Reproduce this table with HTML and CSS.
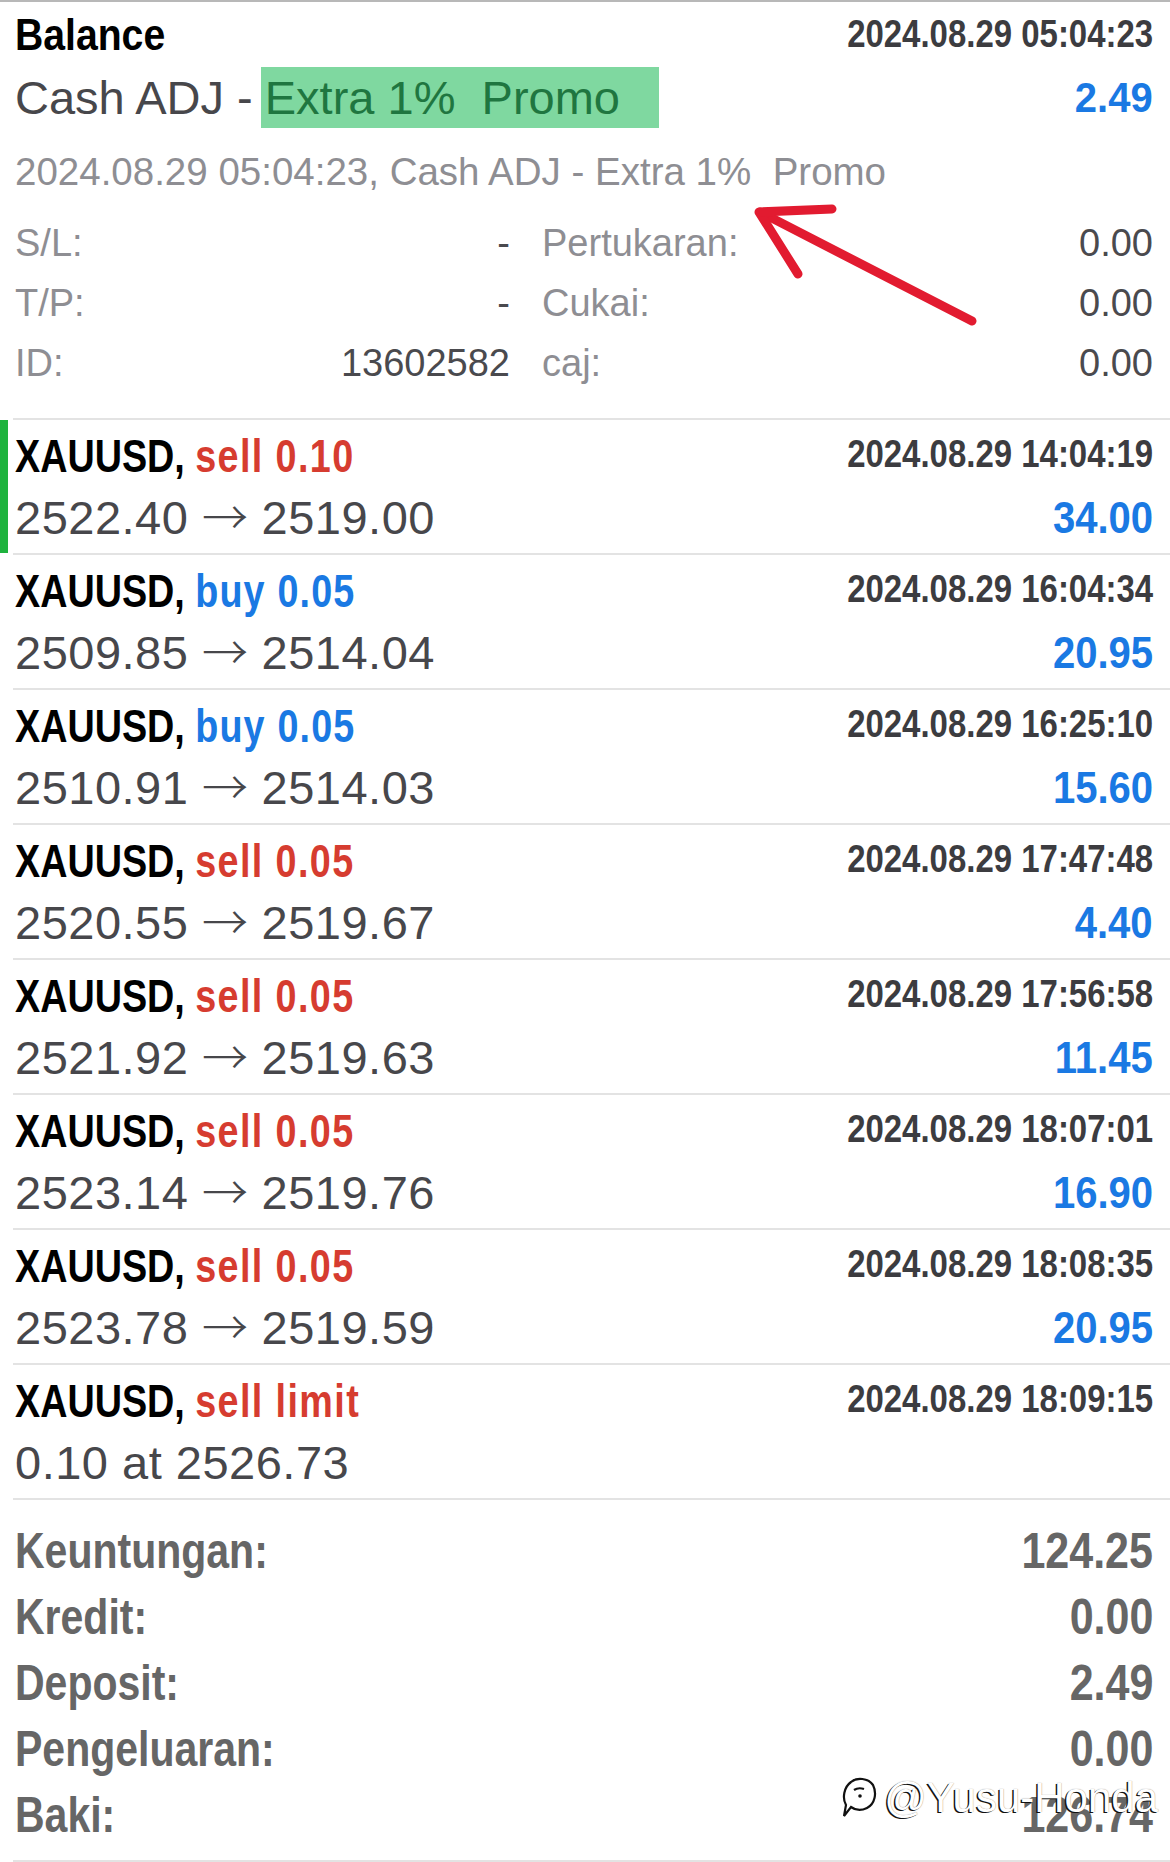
FILE: index.html
```html
<!DOCTYPE html>
<html lang="ms">
<head>
<meta charset="utf-8">
<title>Sejarah</title>
<link rel="stylesheet" href="styles.css">
</head>
<body>
<div class="page">
  <div class="topline"></div>

  <section class="deal">
    <div class="deal-top">
      <span class="deal-title bold">Balance</span>
      <span class="time bold">2024.08.29 05:04:23</span>
    </div>
    <div class="deal-main">
      <span class="comment">Cash ADJ - <span class="hl">Extra 1%&nbsp; Promo</span></span>
      <span class="amount bold">2.49</span>
    </div>
    <div class="detail">2024.08.29 05:04:23, Cash ADJ - Extra 1%&nbsp; Promo</div>
    <div class="kv-grid">
      <div class="kv"><span class="k">S/L:</span><span class="v">-</span></div>
      <div class="kv"><span class="k">Pertukaran:</span><span class="v">0.00</span></div>
      <div class="kv"><span class="k">T/P:</span><span class="v">-</span></div>
      <div class="kv"><span class="k">Cukai:</span><span class="v">0.00</span></div>
      <div class="kv"><span class="k">ID:</span><span class="v">13602582</span></div>
      <div class="kv"><span class="k">caj:</span><span class="v">0.00</span></div>
    </div>
  </section>

  <svg class="annot" width="1170" height="420" viewBox="0 0 1170 420" aria-hidden="true">
    <path d="M972 321 L760 212" />
    <path d="M832 209 L759 212 L798 274" />
  </svg>

  <div class="trades">
    <div class="trade">
      <div class="mark on"></div>
      <div class="trade-body">
        <div class="line"><span class="sym bold">XAUUSD, <span class="sell">sell 0.10</span></span><span class="time bold">2024.08.29 14:04:19</span></div>
        <div class="line"><span class="price">2522.40 <span class="arr">→</span> 2519.00</span><span class="amount bold">34.00</span></div>
      </div>
    </div>
    <div class="trade">
      <div class="mark"></div>
      <div class="trade-body">
        <div class="line"><span class="sym bold">XAUUSD, <span class="buy">buy 0.05</span></span><span class="time bold">2024.08.29 16:04:34</span></div>
        <div class="line"><span class="price">2509.85 <span class="arr">→</span> 2514.04</span><span class="amount bold">20.95</span></div>
      </div>
    </div>
    <div class="trade">
      <div class="mark"></div>
      <div class="trade-body">
        <div class="line"><span class="sym bold">XAUUSD, <span class="buy">buy 0.05</span></span><span class="time bold">2024.08.29 16:25:10</span></div>
        <div class="line"><span class="price">2510.91 <span class="arr">→</span> 2514.03</span><span class="amount bold">15.60</span></div>
      </div>
    </div>
    <div class="trade">
      <div class="mark"></div>
      <div class="trade-body">
        <div class="line"><span class="sym bold">XAUUSD, <span class="sell">sell 0.05</span></span><span class="time bold">2024.08.29 17:47:48</span></div>
        <div class="line"><span class="price">2520.55 <span class="arr">→</span> 2519.67</span><span class="amount bold">4.40</span></div>
      </div>
    </div>
    <div class="trade">
      <div class="mark"></div>
      <div class="trade-body">
        <div class="line"><span class="sym bold">XAUUSD, <span class="sell">sell 0.05</span></span><span class="time bold">2024.08.29 17:56:58</span></div>
        <div class="line"><span class="price">2521.92 <span class="arr">→</span> 2519.63</span><span class="amount bold">11.45</span></div>
      </div>
    </div>
    <div class="trade">
      <div class="mark"></div>
      <div class="trade-body">
        <div class="line"><span class="sym bold">XAUUSD, <span class="sell">sell 0.05</span></span><span class="time bold">2024.08.29 18:07:01</span></div>
        <div class="line"><span class="price">2523.14 <span class="arr">→</span> 2519.76</span><span class="amount bold">16.90</span></div>
      </div>
    </div>
    <div class="trade">
      <div class="mark"></div>
      <div class="trade-body">
        <div class="line"><span class="sym bold">XAUUSD, <span class="sell">sell 0.05</span></span><span class="time bold">2024.08.29 18:08:35</span></div>
        <div class="line"><span class="price">2523.78 <span class="arr">→</span> 2519.59</span><span class="amount bold">20.95</span></div>
      </div>
    </div>
    <div class="trade">
      <div class="mark"></div>
      <div class="trade-body">
        <div class="line"><span class="sym bold">XAUUSD, <span class="sell">sell limit</span></span><span class="time bold">2024.08.29 18:09:15</span></div>
        <div class="line"><span class="price">0.10 at 2526.73</span></div>
      </div>
    </div>
  </div>

  <section class="summary">
    <div class="sum-row bold"><span class="l">Keuntungan:</span><span class="v">124.25</span></div>
    <div class="sum-row bold"><span class="l">Kredit:</span><span class="v">0.00</span></div>
    <div class="sum-row bold"><span class="l">Deposit:</span><span class="v">2.49</span></div>
    <div class="sum-row bold"><span class="l">Pengeluaran:</span><span class="v">0.00</span></div>
    <div class="sum-row bold"><span class="l">Baki:</span><span class="v">126.74</span></div>

    <div class="wm">
      <svg class="wm-icon" width="38" height="44" viewBox="0 0 38 44" aria-hidden="true">
        <path d="M10 6 C16 1 27 2 32 9 C36 17 34 28 26 32 C20 35 14 34 10 31 L3 40 L5 29 C1 22 3 11 10 6 Z" fill="#fff" stroke="#111" stroke-width="2.2"/>
        <path d="M13 14 C16 12 20 12 23 13" fill="none" stroke="#111" stroke-width="2.2"/>
        <circle cx="19" cy="20" r="1.8" fill="#111"/>
      </svg>
      <span class="wm-text">@Yusu-Honda</span>
    </div>
  </section>
</div>
</body>
</html>
```

FILE: styles.css
```css
body {
  margin: 0;
  background: #ffffff;
}

.page {
  position: relative;
  width: 1170px;
  font-family: "Liberation Sans", Arial, sans-serif;
  color: #47474b;
}

/* condensed bold: bold face narrowed horizontally */
.bold {
  font-family: "Liberation Sans", Arial, sans-serif;
  font-weight: 700;
  white-space: pre;
}

.topline {
  height: 2px;
  background: #b8b8b8;
}

/* ---- balance deal ---- */
.deal {
  margin-left: 13px;
  padding: 0 17px 25px 2px;
  border-bottom: 2px solid #e3e3e3;
}

.deal-top {
  display: flex;
  justify-content: space-between;
  align-items: flex-start;
  height: 63px;
  padding-top: 3px;
  box-sizing: border-box;
}

.deal-title {
  font-size: 45px;
  line-height: 60px;
  color: #000;
  transform: scaleX(0.87);
  transform-origin: left center;
}

.time {
  font-size: 39px;
  line-height: 57px;
  color: #3c3c40;
  transform: scaleX(0.845);
  transform-origin: right center;
}

.deal-main {
  display: flex;
  justify-content: space-between;
  align-items: flex-start;
  margin-top: 2px;
  height: 61px;
}

.comment {
  font-size: 47px;
  line-height: 61px;
  color: #47474b;
  white-space: nowrap;
}

.hl {
  display: inline-block;
  margin-left: -5px;
  background: #7fd8a0;
  color: #1f7640;
  padding: 0 39px 0 4px;
}

.amount {
  color: #1a79e3;
  transform: scaleX(0.91);
  transform-origin: right center;
}

.deal-main .amount {
  font-size: 43px;
  line-height: 61px;
  transform: scaleX(0.93);
}

.detail {
  margin-top: 19px;
  font-size: 38.5px;
  line-height: 50px;
  color: #8e8e93;
  white-space: nowrap;
}

.kv-grid {
  margin-top: 16px;
  display: grid;
  grid-template-columns: 495px 611px;
  column-gap: 32px;
}

.kv {
  display: flex;
  justify-content: space-between;
  font-size: 38px;
  line-height: 60px;
}

.kv .k {
  color: #8e8e93;
}

.kv .v {
  color: #4a4a4e;
}

.annot {
  position: absolute;
  left: 0;
  top: 0;
  pointer-events: none;
}

.annot path {
  fill: none;
  stroke: #e21b30;
  stroke-width: 9;
  stroke-linecap: round;
  stroke-linejoin: round;
}

/* ---- trades ---- */
.trade {
  display: flex;
}

.mark {
  flex: none;
  width: 8px;
  height: 133px;
}

.mark.on {
  background: #1fb33e;
}

.trade-body {
  flex: 1;
  margin-left: 5px;
  height: 135px;
  box-sizing: border-box;
  padding: 6px 17px 0 2px;
  border-bottom: 2px solid #e3e3e3;
}

.line {
  display: flex;
  justify-content: space-between;
  align-items: flex-start;
}

.sym {
  font-size: 46px;
  line-height: 60px;
  color: #000;
  transform: scaleX(0.82);
  transform-origin: left center;
}

.sell {
  color: #d63c30;
  letter-spacing: 1.7px;
}

.buy {
  color: #1a79e3;
  letter-spacing: 1.4px;
}

.trade .time {
  line-height: 55px;
}

.price {
  font-size: 47px;
  line-height: 64px;
  color: #47474b;
  letter-spacing: 0.5px;
  white-space: nowrap;
}

.arr {
  font-family: "Noto Sans CJK SC", "DejaVu Sans", sans-serif;
  font-weight: 300;
  font-size: 46px;
  line-height: 1;
  letter-spacing: 0;
}

.trade .amount {
  font-size: 44px;
  line-height: 64px;
}

/* ---- summary ---- */
.summary {
  position: relative;
  margin-left: 13px;
  padding: 18px 17px 12px 2px;
  border-bottom: 2px solid #e3e3e3;
}

.sum-row {
  display: flex;
  justify-content: space-between;
  font-size: 50px;
  line-height: 66px;
  color: #666666;
}

.sum-row .l {
  transform: scaleX(0.82);
  transform-origin: left center;
}

.sum-row .v {
  transform: scaleX(0.86);
  transform-origin: right center;
}

.wm {
  position: absolute;
  right: 12px;
  top: 276px;
  display: flex;
  align-items: center;
  gap: 5px;
}

.wm-icon {
  display: block;
}

.wm-text {
  font-family: "Liberation Sans", Arial, sans-serif;
  font-size: 42px;
  line-height: 44px;
  color: #ffffff;
  text-shadow: -1.5px 0.5px 0 #111, 0 0 1px rgba(0, 0, 0, 0.55);
}
```
